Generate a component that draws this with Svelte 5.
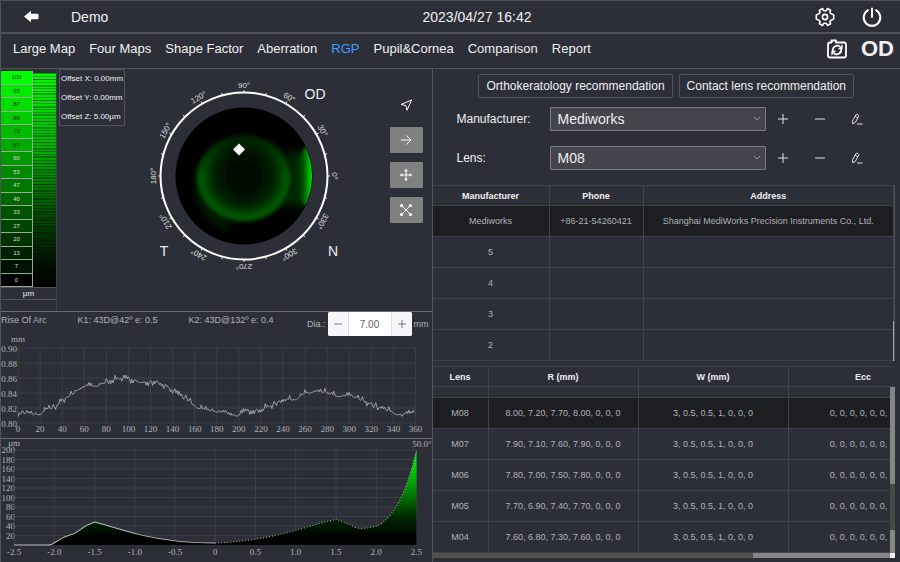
<script>
	/**
	 * RGP page: fluorescein simulation, arc / clearance charts and lens lists.
	 */
	const tabs = [
		'Large Map',
		'Four Maps',
		'Shape Factor',
		'Aberration',
		'RGP',
		'Pupil&Cornea',
		'Comparison',
		'Report'
	];
	let activeTab = $state('RGP');
	let manufacturer = $state('Mediworks');
	let lens = $state('M08');
	let diameter = $state(7);

	const scale = [100, 93, 87, 80, 73, 67, 60, 53, 47, 40, 33, 27, 20, 13, 7, 0];
	const ticks = Array.from({ length: 24 }, (_, i) => i * 15);
	const degrees = ticks.filter((t) => t % 30 === 0);

	const manufacturers = [
		{
			name: 'Mediworks',
			phone: '+86-21-54260421',
			address: 'Shanghai MediWorks Precision Instruments Co., Ltd.'
		},
		{ name: '5' },
		{ name: '4' },
		{ name: '3' },
		{ name: '2' }
	];

	const lenses = [
		{ name: 'M08', r: '8.00, 7.20, 7.70, 8.00, 0, 0, 0' },
		{ name: 'M07', r: '7.90, 7.10, 7.60, 7.90, 0, 0, 0' },
		{ name: 'M06', r: '7.80, 7.00, 7.50, 7.80, 0, 0, 0' },
		{ name: 'M05', r: '7.70, 6.90, 7.40, 7.70, 0, 0, 0' },
		{ name: 'M04', r: '7.60, 6.80, 7.30, 7.60, 0, 0, 0' }
	];

	// Rise of arc: [degree, mm]
	const arcKeys = [
		[0, 0.814], [8, 0.814], [14, 0.812], [20, 0.811], [25, 0.818], [34, 0.822], [40, 0.83],
		[50, 0.84], [60, 0.85], [72, 0.849], [80, 0.856], [95, 0.86], [104, 0.858], [110, 0.854],
		[125, 0.856], [136, 0.848], [146, 0.837], [154, 0.832], [162, 0.82], [170, 0.818],
		[180, 0.815], [192, 0.814], [198, 0.809], [206, 0.816], [220, 0.818], [230, 0.824],
		[240, 0.832], [252, 0.831], [258, 0.839], [270, 0.842], [280, 0.841], [290, 0.835],
		[300, 0.837], [312, 0.831], [326, 0.821], [336, 0.817], [343, 0.811], [350, 0.812], [359, 0.814]
	];
	const arcX = (deg) => 17 + (deg / 360) * 397;
	const arcY = (mm) => 12 + ((0.9 - mm) / 0.1) * 75;

	function arcLine() {
		const out = [];
		let k = 0;
		let seed = 7;
		for (let d = 0; d <= 359; d += 1) {
			while (k < arcKeys.length - 2 && arcKeys[k + 1][0] < d) k++;
			const [d0, v0] = arcKeys[k];
			const [d1, v1] = arcKeys[k + 1];
			seed = (seed * 16807) % 2147483647;
			const calm = [20, 70, 111, 162, 198, 252, 290, 343].some((c) => Math.abs(c - d) < 4);
			const noise = calm ? 0 : (seed / 2147483647 - 0.5) * 0.011;
			const v = v0 + ((v1 - v0) * (d - d0)) / (d1 - d0) + (d % 2 ? 0 : noise);
			out.push(`${arcX(d).toFixed(1)},${arcY(v).toFixed(1)}`);
		}
		return out.join(' ');
	}

	// Clearance profile, left half solid and right half dotted
	const leftProfile =
		'M13 106H47C52 106 55 102 61 99S70 96 74 94C80 90 86 85 94 83C108 87 124 92 140 96C162 101 184 104 214 104';
	const rightProfile =
		'M214 104C236 103 260 100 280 95C300 90 318 84 335 80Q345 84 356 89C364 90 370 88 376 87C397 75 408 42 415 11';

	function step(by) {
		diameter = Math.round((diameter + by) * 100) / 100;
	}
</script>

{#snippet rowTools(what)}
	<div class="row-tools">
		<button aria-label="Add {what}">
			<svg viewBox="0 0 12 12" width="12" height="12"><path d="M1 6h10M6 1v10" /></svg>
		</button>
		<button aria-label="Remove {what}">
			<svg viewBox="0 0 12 12" width="12" height="12"><path d="M1 6h10" /></svg>
		</button>
		<button aria-label="Edit {what}">
			<svg viewBox="0 0 12 12" width="12" height="12">
				<path d="M1.600 7.800 5 1.600q.4-.6 1-.3l1.400.8q.6.4.3 1L4.400 9.300 1.700 10.800zM4.100 3.200l2.700 1.500M6 11h5.500" />
			</svg>
		</button>
	</div>
{/snippet}

<div class="app">
	<header>
		<button class="icon-btn" aria-label="Back">
			<svg viewBox="0 0 16 14" width="16" height="14">
				<path d="M0 6.500 7 .8v3h6.500q1 0 1 1v3.400q0 1-1 1H7v3z" fill="#fff" />
			</svg>
		</button>
		<span>Demo</span>
		<time datetime="2023-04-27T16:42">2023/04/27 16:42</time>
		<div class="header-tools">
			<button class="icon-btn" aria-label="Settings">
				<svg viewBox="0 0 20 20" width="20" height="20" class="line-icon">
					<path d="M7.600 1.500 8.500 3.500Q10 4.100 11.500 3.500L12.400 1.500 15.600 3.300 14.900 5.400Q15.600 6.900 17.200 7.200L18.700 8.200V11.800L17.200 12.800Q15.600 13.100 14.900 14.600L15.600 16.700 12.400 18.500 11.500 16.500Q10 15.900 8.500 16.500L7.600 18.500 4.400 16.700 5.100 14.600Q4.400 13.100 2.800 12.800L1.300 11.800V8.200L2.800 7.200Q4.400 6.900 5.100 5.400L4.400 3.300z" />
					<circle cx="10" cy="10" r="2.600" />
				</svg>
			</button>
			<button class="icon-btn" aria-label="Power">
				<svg viewBox="0 0 20 20" width="20" height="20" class="line-icon power">
					<path d="M6 3.200a8.300 8.300 0 1 0 8 0M10 1.500v8.500" />
				</svg>
			</button>
		</div>
	</header>

	<nav>
		{#each tabs as tab}
			<button class:active={tab === activeTab} onclick={() => (activeTab = tab)}>{tab}</button>
		{/each}
		<div class="eye-side">
			<button class="icon-btn" aria-label="Retake picture">
				<svg viewBox="0 0 20 20" width="20" height="20" class="line-icon camera">
					<path d="M3 3.500H4.500V1.500H9V3.500H17Q19 3.500 19 5.500V16.500Q19 18.500 17 18.500H3Q1 18.500 1 16.500V5.500Q1 3.500 3 3.500z" />
					<path d="M5.800 12A4.600 4.600 0 0 1 13 7.600M14.200 10A4.600 4.600 0 0 1 7 14.400" />
					<path d="M15.600 5.200V10.200H10.800zM4.400 16.800V11.800H9.200z" fill="#fff" stroke="none" />
				</svg>
			</button>
			<strong>OD</strong>
		</div>
	</nav>

	<main>
		<section class="left">
			<div class="map-panel">
				<div class="scale">
					<div class="scale-body">
						<div class="scale-values">
							{#each scale as value}
								<span class:dark={value > 60} style="background: rgb(0, {Math.round(value * 2.55)}, 0)">{value}</span>
							{/each}
						</div>
						<div class="scale-ramp"></div>
					</div>
					<div class="scale-unit">µm</div>
				</div>

				<div class="offsets">
					<span>Offset X: 0.00mm</span>
					<span>Offset Y: 0.00mm</span>
					<span>Offset Z: 5.00µm</span>
				</div>

				<svg class="eye" viewBox="0 0 220 240" width="220" height="240" role="img" aria-label="Fluorescein map">
					<defs>
						<clipPath id="disc"><circle cx="110" cy="107" r="68" /></clipPath>
						<radialGradient id="pool">
							<stop offset="0" stop-color="#000900" />
							<stop offset="0.35" stop-color="#000f00" />
							<stop offset="0.6" stop-color="#002200" />
							<stop offset="0.82" stop-color="#005200" />
							<stop offset="0.88" stop-color="#005600" />
							<stop offset="0.95" stop-color="#002c00" />
							<stop offset="1" stop-color="#001000" stop-opacity="0" />
						</radialGradient>
						<linearGradient id="shade" x2="0" y2="1">
							<stop offset="0" stop-color="#000" stop-opacity="0.8" />
							<stop offset="0.5" stop-color="#000" stop-opacity="0" />
						</linearGradient>
						<linearGradient id="edge">
							<stop offset="0" stop-color="#003000" stop-opacity="0" />
							<stop offset="0.4" stop-color="#006800" />
							<stop offset="0.75" stop-color="#00e800" />
							<stop offset="1" stop-color="#0f0" />
						</linearGradient>
						<filter id="soft" x="-40%" y="-40%" width="180%" height="180%"><feGaussianBlur stdDeviation="4" /></filter>
						<filter id="slight" x="-20%" y="-20%" width="140%" height="140%"><feGaussianBlur stdDeviation="1" /></filter>
					</defs>

					<circle cx="110" cy="107" r="68.500" fill="#000" />
					<g clip-path="url(#disc)">
						<path d="M144 80Q158 88 174 80V140Q158 132 140 138z" fill="#002c00" filter="url(#soft)" />
						<path d="M62 98Q56 146 90 162L100 152Q76 136 72 100z" fill="#001c00" filter="url(#soft)" />
						<ellipse cx="110" cy="109" rx="50" ry="46" fill="url(#pool)" filter="url(#slight)" />
						<ellipse cx="110" cy="107" rx="52" ry="49" fill="url(#shade)" />
						<path d="M172 77Q162 88 162 108T170 136L184 138V77z" fill="url(#edge)" filter="url(#slight)" />
					</g>
					<path d="M105 74.500 111 80.500 105 86.500 99 80.500z" fill="#fff" />

					<circle cx="110" cy="107" r="83.500" fill="none" stroke="#fff" stroke-width="2" />
					{#each ticks as t}
						<path d="M194 107h2" stroke="#ddd" stroke-width="1" transform="rotate({-t} 110 107)" />
					{/each}
					{#each degrees as d}
						<text class="degree" x="110" y="19" transform="rotate({90 - d} 110 107)">{d}°</text>
					{/each}
					<text class="side" x="181" y="30">OD</text>
					<text class="side" x="30" y="187">T</text>
					<text class="side" x="199" y="187">N</text>
				</svg>

				<div class="map-tools">
					<button class="plain" aria-label="Pointer">
						<svg viewBox="0 0 14 14" width="14" height="14"><path d="M12.500 2 2 6.500l4.800 1 1.200 4.800z" /></svg>
					</button>
					<button aria-label="Shift">
						<svg viewBox="0 0 14 14" width="14" height="14"><path d="M2 7h10M7.500 2.500 12 7l-4.500 4.500" /></svg>
					</button>
					<button aria-label="Move">
						<svg viewBox="0 0 14 14" width="14" height="14">
							<path d="M7 2v10M2 7h10" />
							<path class="solid" d="M7 .8 8.800 3.200H5.200zM7 13.200 8.800 10.800H5.200zM.8 7 3.200 5.200v3.600zM13.200 7 10.800 5.200v3.600z" />
						</svg>
					</button>
					<button aria-label="Fit">
						<svg viewBox="0 0 14 14" width="14" height="14">
							<path d="M2.500 2.500l9 9M11.500 2.500l-9 9" />
							{#each [2.5, 11.5] as x}
								{#each [2.5, 11.5] as y}
									<circle cx={x} cy={y} r="1.600" fill="#fff" />
								{/each}
							{/each}
						</svg>
					</button>
				</div>
			</div>

			<div class="arc-panel">
				<div class="arc-info">
					<span>Rise Of Arc</span>
					<span>K1: 43D@42º e: 0.5</span>
					<span>K2: 43D@132º e: 0.4</span>
					<div class="dia">
						<label for="dia">Dia.:</label>
						<div class="stepper">
							<button aria-label="Decrease" onclick={() => step(-0.1)}>
								<svg viewBox="0 0 10 10" width="10" height="10"><path d="M1 5h8" /></svg>
							</button>
							<input id="dia" value={diameter.toFixed(2)} readonly />
							<button aria-label="Increase" onclick={() => step(0.1)}>
								<svg viewBox="0 0 10 10" width="10" height="10"><path d="M1 5h8M5 1v8" /></svg>
							</button>
						</div>
						<span>mm</span>
					</div>
				</div>
				<svg class="chart" viewBox="0 0 430 102" role="img" aria-label="Rise of arc">
					<text x="17" y="6" text-anchor="middle">mm</text>
					{#each [0.9, 0.88, 0.86, 0.84, 0.82, 0.8] as mm}
						<path class="grid" d="M17 {arcY(mm)}H414" />
						<text x="16" y={arcY(mm) + 4} text-anchor="end">{mm.toFixed(2)}</text>
					{/each}
					{#each Array.from({ length: 19 }, (_, i) => i * 20) as deg}
						<path class="grid" d="M{arcX(deg)} 12V87" />
						<text x={arcX(deg)} y="96" text-anchor="middle">{deg}</text>
					{/each}
					<polyline points={arcLine()} fill="none" stroke="#b4b5bb" stroke-width="0.800" />
				</svg>
			</div>

			<div class="profile-panel">
				<svg class="chart" viewBox="0 0 430 122" role="img" aria-label="Clearance profile">
					<defs>
						<linearGradient id="clearance" gradientUnits="userSpaceOnUse" x1="0" y1="11" x2="0" y2="106">
							<stop offset="0" stop-color="#00ff00" />
							<stop offset="0.35" stop-color="#00a000" />
							<stop offset="0.7" stop-color="#002a00" />
							<stop offset="0.9" stop-color="#000400" />
							<stop offset="1" stop-color="#000" />
						</linearGradient>
					</defs>
					<text x="13" y="7" text-anchor="middle">µm</text>
					<text x="430" y="8" text-anchor="end">50.0°</text>
					{#each Array.from({ length: 10 }, (_, i) => 200 - i * 20) as um, i}
						<path class="grid" d="M13 {11 + i * 9.5}H415" />
						<text x="14" y={14 + i * 9.5} text-anchor="end">{um}</text>
					{/each}
					{#each Array.from({ length: 11 }, (_, i) => i - 5) as half}
						<path class="grid" d="M{214 + half * 40.2} 11V106" />
						<text x={214 + half * 40.2} y="116" text-anchor="middle">{half === 0 ? '0' : (half / 2).toFixed(1)}</text>
					{/each}
					<path d="{leftProfile}V106z" fill="url(#clearance)" />
					<path d="{rightProfile}V106H214z" fill="url(#clearance)" />
					<path d={leftProfile} fill="none" stroke="#b9bac0" />
					<path d={rightProfile} fill="none" stroke="#a9b0a9" stroke-dasharray="1 2" />
				</svg>
			</div>
		</section>

		<section class="right">
			<div class="recommend">
				<button>Orthokeratology recommendation</button>
				<button>Contact lens recommendation</button>
			</div>

			<div class="form-row">
				<label for="manufacturer">Manufacturer:</label>
				<div class="select">
					<select id="manufacturer" bind:value={manufacturer}>
						{#each manufacturers as m}
							<option>{m.name}</option>
						{/each}
					</select>
					<svg viewBox="0 0 8 6" width="8" height="6"><path d="M1 1l3 3 3-3" /></svg>
				</div>
				{@render rowTools('manufacturer')}
			</div>
			<div class="form-row">
				<label for="lens">Lens:</label>
				<div class="select">
					<select id="lens" bind:value={lens}>
						{#each lenses as l}
							<option>{l.name}</option>
						{/each}
					</select>
					<svg viewBox="0 0 8 6" width="8" height="6"><path d="M1 1l3 3 3-3" /></svg>
				</div>
				{@render rowTools('lens')}
			</div>

			<div class="table-box makers">
				<table>
					<colgroup><col class="c-name" /><col class="c-phone" /><col /></colgroup>
					<thead>
						<tr><th>Manufacturer</th><th>Phone</th><th>Address</th></tr>
					</thead>
					<tbody>
						{#each manufacturers as m}
							<tr class:selected={m.name === manufacturer}>
								<td>{m.name}</td>
								<td>{m.phone ?? ''}</td>
								<td>{m.address ?? ''}</td>
							</tr>
						{/each}
					</tbody>
				</table>
				<span class="thin-thumb"></span>
			</div>

			<div class="table-box lenses">
				<table>
					<colgroup><col class="c-lens" /><col class="c-set" /><col class="c-set" /><col class="c-set" /></colgroup>
					<thead>
						<tr><th>Lens</th><th>R (mm)</th><th>W (mm)</th><th>Ecc</th></tr>
					</thead>
					<tbody>
						<tr class="cut"><td></td><td></td><td></td><td></td></tr>
						{#each lenses as l}
							<tr class:selected={l.name === lens}>
								<td>{l.name}</td>
								<td>{l.r}</td>
								<td>3, 0.5, 0.5, 1, 0, 0, 0</td>
								<td class="ecc">0, 0, 0, 0, 0, 0,</td>
							</tr>
						{/each}
					</tbody>
				</table>
				<div class="bar-v"><span class="thumb-long"></span><span class="thumb-short"></span></div>
				<div class="bar-h"><span></span></div>
			</div>
		</section>
	</main>
</div>

<style>
	:global(body) {
		background: #2d2f38;
	}

	.app {
		--bg: #2d2f38;
		--line: #50535a;
		--cell: #40434c;
		--text: #f0f0f2;
		--muted: #b0b2b9;
		min-height: 100vh;
		display: flex;
		flex-direction: column;
		box-sizing: border-box;
		border-left: 1px solid var(--line);
		background: var(--bg);
		color: var(--text);
		font-family: 'Liberation Sans', Arial, sans-serif;
		font-size: 12px;
		overflow: hidden;
	}

	button,
	input,
	select {
		font-family: inherit;
		color: inherit;
		margin: 0;
		box-sizing: border-box;
	}

	button {
		padding: 0;
		border: 0;
		background: none;
		cursor: pointer;
	}

	svg {
		display: block;
		flex: none;
	}

	header {
		display: grid;
		grid-template-columns: 48px 1fr auto 1fr;
		align-items: center;
		height: 31px;
		padding: 0 17px 0 22px;
		border-top: 1px solid var(--line);
		border-bottom: 2px solid var(--line);
		font-size: 14px;
	}

	.icon-btn {
		display: flex;
		padding: 1px;
	}

	.header-tools {
		display: flex;
		justify-content: flex-end;
		gap: 25px;
	}

	.line-icon {
		fill: none;
		stroke: #fff;
		stroke-width: 1.6;
		stroke-linejoin: round;
	}

	.camera {
		stroke-width: 1.8;
	}

	.power {
		stroke-width: 2;
		stroke-linecap: round;
	}

	nav {
		display: flex;
		align-items: center;
		gap: 14px;
		height: 34px;
		padding: 0 6px 5px 12px;
		box-sizing: border-box;
	}

	nav > button {
		font-size: 13px;
	}

	nav > .active {
		color: #409eff;
	}

	.eye-side {
		display: flex;
		align-items: center;
		gap: 13px;
		margin-left: auto;
	}

	.eye-side strong {
		font-size: 22px;
		line-height: 24px;
	}

	main {
		display: grid;
		grid-template-columns: 48fr 52fr;
		flex: 1;
		border-top: 1px solid var(--line);
	}

	.left {
		min-width: 0;
		border-right: 1px solid var(--line);
	}

	.map-panel {
		display: flex;
		justify-content: space-between;
		padding-right: 9px;
		height: 242px;
	}

	.scale {
		display: flex;
		flex-direction: column;
		width: 56px;
		box-sizing: border-box;
		border-right: 1px solid var(--cell);
	}

	.scale-body {
		display: flex;
		height: 216px;
		padding-top: 2px;
	}

	.scale-values {
		display: flex;
		flex-direction: column;
		width: 31px;
		border-right: 1px solid #9aaa9a;
	}

	.scale-values span {
		flex: 1;
		display: flex;
		align-items: center;
		justify-content: center;
		border-bottom: 1px solid #9aaa9a;
		color: #ddd;
		font-size: 6px;
	}

	.scale-values .dark {
		color: #102010;
	}

	.scale-ramp {
		flex: 1;
		margin-top: 2px;
		background:
			repeating-linear-gradient(rgba(0, 0, 0, 0.35) 0 1px, transparent 1px 3px),
			repeating-linear-gradient(transparent 0 6px, rgba(0, 0, 0, 0.3) 6px 7px),
			linear-gradient(#00ff00, #00b400 35%, #005000 65%, #001400 88%, #000);
	}

	.scale-unit {
		height: 11px;
		border: 1px solid var(--line);
		border-width: 1px 0;
		font-size: 8px;
		line-height: 11px;
		text-align: center;
	}

	.offsets {
		display: flex;
		flex-direction: column;
		align-self: flex-start;
		gap: 10px;
		margin: 0 9px 0 2px;
		padding: 4px 1px 4px 1px;
		border: 1px solid var(--line);
		font-size: 8px;
		line-height: 9px;
		white-space: nowrap;
	}

	.degree {
		font-size: 8px;
		fill: #ddd;
		text-anchor: middle;
	}

	.side {
		font-size: 14px;
		fill: #eee;
		text-anchor: middle;
	}

	.map-tools {
		display: flex;
		flex-direction: column;
		gap: 9px;
		margin: 23px 0 0 auto;
	}

	.map-tools button {
		display: flex;
		align-items: center;
		justify-content: center;
		width: 33px;
		height: 26px;
		border-radius: 1px;
		background: #808080;
	}

	.map-tools .plain {
		background: none;
	}

	.map-tools path {
		fill: none;
		stroke: #fff;
	}

	.map-tools .solid {
		fill: #fff;
		stroke: none;
	}

	.arc-panel,
	.profile-panel {
		border-top: 1px solid #696b6d;
	}

	.arc-info {
		display: flex;
		align-items: flex-start;
		gap: 31px;
		height: 24px;
		padding-right: 3px;
		color: var(--muted);
		font-size: 9px;
		line-height: 16px;
		white-space: nowrap;
	}

	.dia {
		display: flex;
		align-items: center;
		gap: 2px;
		margin-left: auto;
		line-height: 24px;
	}

	.stepper {
		display: flex;
		width: 84px;
		height: 24px;
		border-radius: 2px;
		background: #fff;
		overflow: hidden;
	}

	.stepper button {
		display: flex;
		align-items: center;
		justify-content: center;
		width: 20px;
		background: #f5f7fa;
	}

	.stepper path {
		stroke: #777;
	}

	.stepper input {
		flex: 1;
		min-width: 0;
		border: 1px solid #dcdfe6;
		border-width: 0 1px;
		padding: 0;
		color: #606266;
		font-size: 10px;
		text-align: center;
	}

	.chart {
		width: 100%;
		height: auto;
		overflow: visible;
	}

	.chart text {
		fill: var(--muted);
		font-family: 'Liberation Serif', 'Times New Roman', serif;
		font-size: 9px;
	}

	.grid {
		stroke: #3c3e47;
		fill: none;
	}

	.right {
		min-width: 0;
		padding-right: 5px;
	}

	.recommend {
		display: flex;
		justify-content: center;
		gap: 6px;
		padding: 5px 0 9px 5px;
	}

	.recommend button {
		height: 24px;
		padding: 0 7px;
		border: 1px solid var(--line);
		border-radius: 2px;
		font-size: 12px;
	}

	.form-row {
		display: grid;
		grid-template-columns: 93px 1fr 129px;
		align-items: center;
		height: 24px;
		margin-bottom: 15px;
		padding-left: 24px;
	}

	.select {
		position: relative;
	}

	.select select {
		display: block;
		width: 100%;
		height: 24px;
		padding: 0 7px;
		border: 1px solid #7a7b82;
		border-radius: 1px;
		background: #45444c;
		font-size: 14px;
		appearance: none;
	}

	.select svg {
		position: absolute;
		top: 9px;
		right: 5px;
		fill: none;
		stroke: #9a9ba1;
		pointer-events: none;
	}

	.row-tools {
		display: flex;
		gap: 25px;
		padding-left: 11px;
	}

	.row-tools svg {
		fill: none;
		stroke: #e4e4e6;
	}

	.table-box {
		position: relative;
		overflow: hidden;
		border-top: 1px solid var(--cell);
	}

	.makers {
		margin-bottom: 5px;
		border-right: 1px solid var(--line);
	}

	table {
		width: 100%;
		border-collapse: separate;
		border-spacing: 0;
		table-layout: fixed;
	}

	.lenses table {
		width: 506px;
	}

	.c-name {
		width: 117px;
	}

	.c-phone {
		width: 94px;
	}

	.c-lens {
		width: 56px;
	}

	.c-set {
		width: 150px;
	}

	th,
	td {
		box-sizing: border-box;
		padding: 0;
		border: 1px solid var(--cell);
		border-width: 0 1px 1px 0;
		font-size: 9px;
		text-align: center;
		white-space: nowrap;
	}

	th {
		height: 20px;
	}

	td {
		height: 31px;
		color: var(--muted);
	}

	/* keeps the values clear of the scrollbar */
	.ecc {
		padding-right: 9px;
	}

	.cut td {
		height: 11px;
	}

	.selected td {
		background: #1d1e22;
	}

	.thin-thumb {
		position: absolute;
		right: 0;
		bottom: 0;
		width: 1px;
		height: 40px;
		background: #a5a6a8;
	}

	.bar-v {
		position: absolute;
		top: 20px;
		right: 0;
		bottom: 0;
		width: 5px;
		display: flex;
		flex-direction: column;
		justify-content: space-between;
		background: #48484a;
	}

	.bar-v span {
		background: #858585;
	}

	.thumb-long {
		height: 57%;
	}

	.thumb-short {
		height: 28px;
		border-bottom: 5px solid #f0f0f0;
		box-sizing: border-box;
	}

	.bar-h {
		height: 5px;
		margin-right: 5px;
		background: #50504e;
	}

	.bar-h span {
		display: block;
		width: 30%;
		height: 100%;
		margin-left: auto;
		background: #858585;
	}
</style>
